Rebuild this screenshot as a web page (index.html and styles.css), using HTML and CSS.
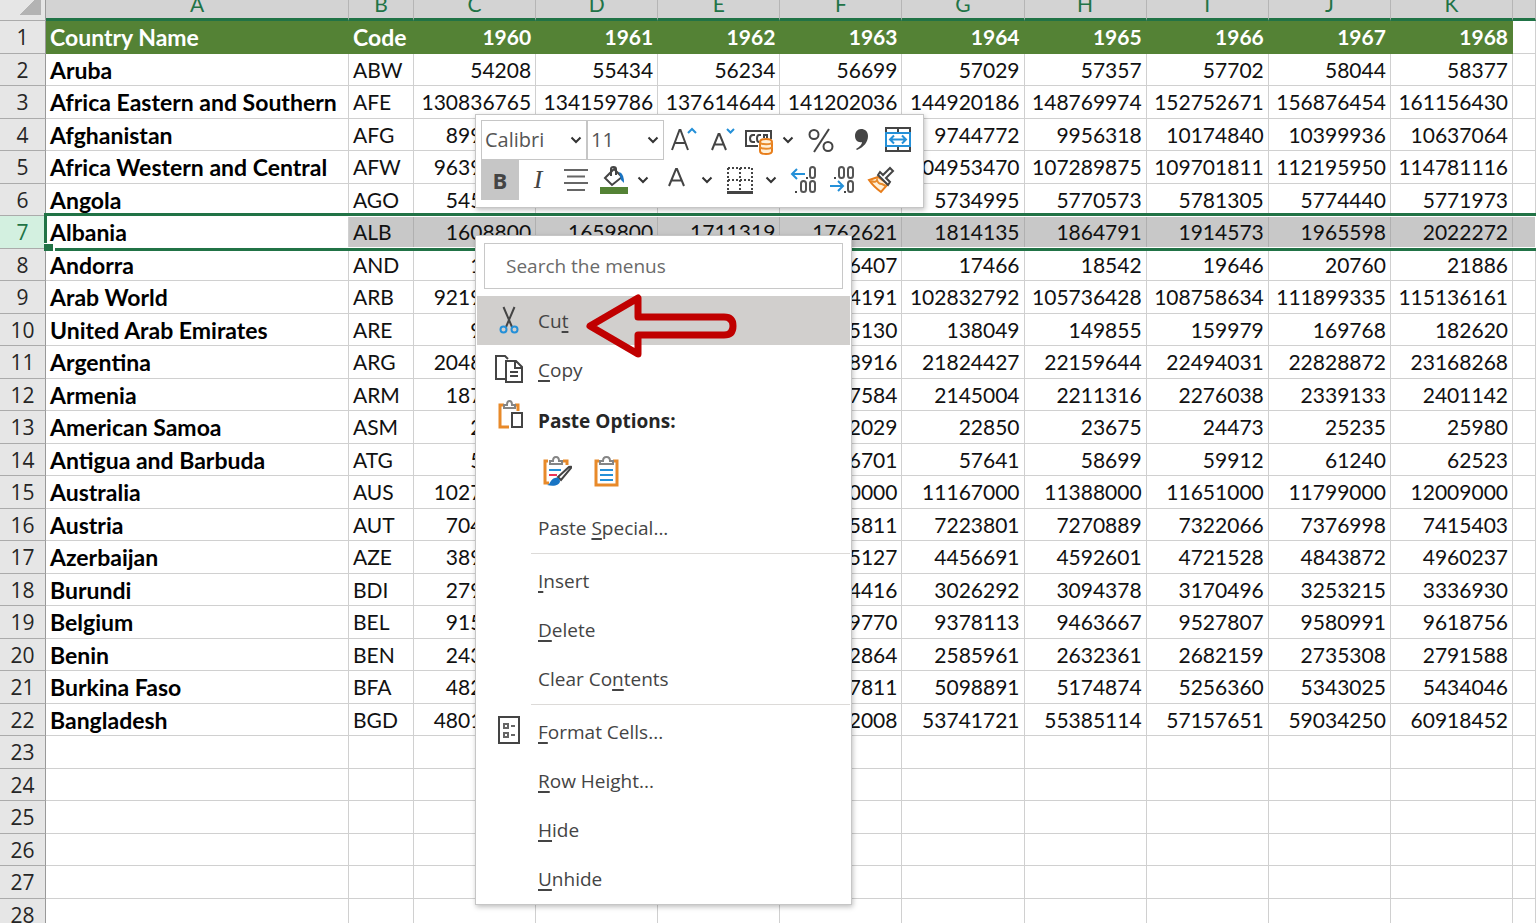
FILE: index.html
```html
<!DOCTYPE html>
<html lang="en">
<head>
<meta charset="utf-8">
<title>Population by country</title>
<link rel="stylesheet" href="styles.css">
</head>
<body>
<main class="workbook">
<table class="sheet">
<colgroup><col class="col-head"><col class="col-name"><col class="col-code"><col span="9"><col class="col-rest"></colgroup>
<thead>
<tr><th class="corner"></th><th>A</th><th>B</th><th>C</th><th>D</th><th>E</th><th>F</th><th>G</th><th>H</th><th>I</th><th>J</th><th>K</th><th></th></tr>
</thead>
<tbody>
<tr class="titles"><th>1</th><td>Country Name</td><td>Code</td><td>1960</td><td>1961</td><td>1962</td><td>1963</td><td>1964</td><td>1965</td><td>1966</td><td>1967</td><td>1968</td><td></td></tr>
<tr><th>2</th><td>Aruba</td><td>ABW</td><td>54208</td><td>55434</td><td>56234</td><td>56699</td><td>57029</td><td>57357</td><td>57702</td><td>58044</td><td>58377</td><td></td></tr>
<tr><th>3</th><td>Africa Eastern and Southern</td><td>AFE</td><td>130836765</td><td>134159786</td><td>137614644</td><td>141202036</td><td>144920186</td><td>148769974</td><td>152752671</td><td>156876454</td><td>161156430</td><td></td></tr>
<tr><th>4</th><td>Afghanistan</td><td>AFG</td><td>8996967</td><td></td><td></td><td></td><td>9744772</td><td>9956318</td><td>10174840</td><td>10399936</td><td>10637064</td><td></td></tr>
<tr><th>5</th><td>Africa Western and Central</td><td>AFW</td><td>96396419</td><td></td><td></td><td></td><td>104953470</td><td>107289875</td><td>109701811</td><td>112195950</td><td>114781116</td><td></td></tr>
<tr><th>6</th><td>Angola</td><td>AGO</td><td>5454938</td><td></td><td></td><td></td><td>5734995</td><td>5770573</td><td>5781305</td><td>5774440</td><td>5771973</td><td></td></tr>
<tr class="selected"><th>7</th><td>Albania</td><td>ALB</td><td>1608800</td><td>1659800</td><td>1711319</td><td>1762621</td><td>1814135</td><td>1864791</td><td>1914573</td><td>1965598</td><td>2022272</td><td></td></tr>
<tr><th>8</th><td>Andorra</td><td>AND</td><td>13410</td><td></td><td></td><td>16407</td><td>17466</td><td>18542</td><td>19646</td><td>20760</td><td>21886</td><td></td></tr>
<tr><th>9</th><td>Arab World</td><td>ARB</td><td>92197715</td><td></td><td></td><td>100034191</td><td>102832792</td><td>105736428</td><td>108758634</td><td>111899335</td><td>115136161</td><td></td></tr>
<tr><th>10</th><td>United Arab Emirates</td><td>ARE</td><td>92417</td><td></td><td></td><td>125130</td><td>138049</td><td>149855</td><td>159979</td><td>169768</td><td>182620</td><td></td></tr>
<tr><th>11</th><td>Argentina</td><td>ARG</td><td>20481781</td><td></td><td></td><td>21488916</td><td>21824427</td><td>22159644</td><td>22494031</td><td>22828872</td><td>23168268</td><td></td></tr>
<tr><th>12</th><td>Armenia</td><td>ARM</td><td>1874119</td><td></td><td></td><td>2077584</td><td>2145004</td><td>2211316</td><td>2276038</td><td>2339133</td><td>2401142</td><td></td></tr>
<tr><th>13</th><td>American Samoa</td><td>ASM</td><td>20127</td><td></td><td></td><td>22029</td><td>22850</td><td>23675</td><td>24473</td><td>25235</td><td>25980</td><td></td></tr>
<tr><th>14</th><td>Antigua and Barbuda</td><td>ATG</td><td>54132</td><td></td><td></td><td>56701</td><td>57641</td><td>58699</td><td>59912</td><td>61240</td><td>62523</td><td></td></tr>
<tr><th>15</th><td>Australia</td><td>AUS</td><td>10276477</td><td></td><td></td><td>10950000</td><td>11167000</td><td>11388000</td><td>11651000</td><td>11799000</td><td>12009000</td><td></td></tr>
<tr><th>16</th><td>Austria</td><td>AUT</td><td>7047539</td><td></td><td></td><td>7175811</td><td>7223801</td><td>7270889</td><td>7322066</td><td>7376998</td><td>7415403</td><td></td></tr>
<tr><th>17</th><td>Azerbaijan</td><td>AZE</td><td>3895398</td><td></td><td></td><td>4315127</td><td>4456691</td><td>4592601</td><td>4721528</td><td>4843872</td><td>4960237</td><td></td></tr>
<tr><th>18</th><td>Burundi</td><td>BDI</td><td>2797925</td><td></td><td></td><td>2964416</td><td>3026292</td><td>3094378</td><td>3170496</td><td>3253215</td><td>3336930</td><td></td></tr>
<tr><th>19</th><td>Belgium</td><td>BEL</td><td>9153489</td><td></td><td></td><td>9289770</td><td>9378113</td><td>9463667</td><td>9527807</td><td>9580991</td><td>9618756</td><td></td></tr>
<tr><th>20</th><td>Benin</td><td>BEN</td><td>2431617</td><td></td><td></td><td>2542864</td><td>2585961</td><td>2632361</td><td>2682159</td><td>2735308</td><td>2791588</td><td></td></tr>
<tr><th>21</th><td>Burkina Faso</td><td>BFA</td><td>4829289</td><td></td><td></td><td>5027811</td><td>5098891</td><td>5174874</td><td>5256360</td><td>5343025</td><td>5434046</td><td></td></tr>
<tr><th>22</th><td>Bangladesh</td><td>BGD</td><td>48013505</td><td></td><td></td><td>52202008</td><td>53741721</td><td>55385114</td><td>57157651</td><td>59034250</td><td>60918452</td><td></td></tr>
<tr><th>23</th><td></td><td></td><td></td><td></td><td></td><td></td><td></td><td></td><td></td><td></td><td></td><td></td></tr>
<tr><th>24</th><td></td><td></td><td></td><td></td><td></td><td></td><td></td><td></td><td></td><td></td><td></td><td></td></tr>
<tr><th>25</th><td></td><td></td><td></td><td></td><td></td><td></td><td></td><td></td><td></td><td></td><td></td><td></td></tr>
<tr><th>26</th><td></td><td></td><td></td><td></td><td></td><td></td><td></td><td></td><td></td><td></td><td></td><td></td></tr>
<tr><th>27</th><td></td><td></td><td></td><td></td><td></td><td></td><td></td><td></td><td></td><td></td><td></td><td></td></tr>
<tr><th>28</th><td></td><td></td><td></td><td></td><td></td><td></td><td></td><td></td><td></td><td></td><td></td><td></td></tr>
</tbody>
</table>

<div class="mini-toolbar" role="toolbar" aria-label="Formatting">
<div class="tool-row">
<span class="combo combo-font"><select aria-label="Font"><option>Calibri</option></select><svg class="chev" viewBox="0 0 12 8"><path d="M1.5 1.5 6 6l4.500-4.500"/></svg></span>
<span class="combo combo-size"><select aria-label="Font size"><option>11</option></select><svg class="chev" viewBox="0 0 12 8"><path d="M1.500 1.500 6 6l4.500-4.500"/></svg></span>
<button class="tool" aria-label="Increase font size"><svg width="30" height="30" viewBox="0 0 30 30"><path class="ink" d="M4 25 11.500 5h1L20 25M7 18h10"/><path class="blue" d="m20 8 4-4 4 4"/></svg></button>
<button class="tool" aria-label="Decrease font size"><svg width="30" height="30" viewBox="0 0 30 30"><path class="ink" d="M6 25 12.500 9h1L20 25M8.500 19.500h9"/><path class="blue" d="m21 4 3.500 3.500L28 4"/></svg></button>
<button class="tool" aria-label="Accounting number format"><svg width="30" height="30" viewBox="0 0 30 30"><path class="ink" d="M14 21H2V6h25v8"/><path class="ink" d="M11 10H9q-3 0-3 3.500T9 17h2M17 10h-2q-2 0-2 3.500t2 3.500M20 13v-3h3v3"/><path class="orange-fill" d="M16 17c0-4 12-4 12 0v9c0 4-12 4-12 0z"/><path class="orange" d="M16 17c0 3 12 3 12 0M16 21.500c0 3 12 3 12 0"/></svg></button>
<button class="tool drop" aria-label="Accounting options"><svg class="chev" viewBox="0 0 12 8"><path d="M1.500 1.500 6 6l4.500-4.500"/></svg></button>
<button class="tool wide" aria-label="Percent style"><svg width="30" height="30" viewBox="0 0 30 30"><circle class="ink" cx="9" cy="9.500" r="4.500"/><circle class="ink" cx="23" cy="21.500" r="4.500"/><path class="ink" d="M24 4 9 27"/></svg></button>
<button class="tool" aria-label="Comma style"><svg width="30" height="30" viewBox="0 0 30 30"><path class="solid" d="M15 4c4 0 7 2.500 7 7 0 6-4 11-11 14l-1-1c4-2 6-5 6-7-4 1-7-2-7-6 0-4 2.500-7 6-7z"/></svg></button>
<button class="tool" aria-label="Merge and center"><svg width="30" height="30" viewBox="0 0 30 30"><path class="ink" d="M2 3h24v23H2zM14 3v4M14 22v4"/><path class="blue" d="M2 8h24v13H2zM6 14.500h16M10 10.500l-4 4 4 4M18 10.500l4 4-4 4"/></svg></button>
</div>
<div class="tool-row">
<button class="tool letter on" aria-label="Bold"><b>B</b></button>
<button class="tool letter italic" aria-label="Italic"><i>I</i></button>
<button class="tool" aria-label="Center"><svg width="30" height="30" viewBox="0 0 30 30"><path class="ink thin-gray" d="M3 5h24M6 11.500h18M3 18h24M6 25h18"/></svg></button>
<button class="tool" aria-label="Fill color"><svg width="30" height="30" viewBox="0 0 30 30"><path class="ink" d="M6 13 15 4l8 8-10 8zM12 11V4q0-2 2.500-2T17 4v6"/><path class="deep" d="M20 7q5 1 5 11l-3-3-1-4z"/><path fill="#548235" d="M1 22h28v7H1z"/></svg></button>
<button class="tool drop" aria-label="Fill options"><svg class="chev" viewBox="0 0 12 8"><path d="M1.500 1.500 6 6l4.500-4.500"/></svg></button>
<button class="tool wide" aria-label="Font color"><svg width="30" height="30" viewBox="0 0 30 30"><path class="ink" d="m9 21 7-17h1l7 17M11.500 15.500h10"/></svg></button>
<button class="tool drop" aria-label="Font color options"><svg class="chev" viewBox="0 0 12 8"><path d="M1.500 1.500 6 6l4.500-4.500"/></svg></button>
<button class="tool wide" aria-label="Borders"><svg width="30" height="30" viewBox="0 0 30 30"><path class="dots" d="M4 3h24M4 15h24M4 3v22M16 3v22M28 3v22"/><path class="solid" d="M3 26h26v3H3z"/></svg></button>
<button class="tool drop" aria-label="Border options"><svg class="chev" viewBox="0 0 12 8"><path d="M1.500 1.500 6 6l4.500-4.500"/></svg></button>
<button class="tool wide" aria-label="Increase decimal"><svg width="30" height="30" viewBox="0 0 30 30"><path class="blue" d="M17 9H4M9 4 4 9l5 5"/><path class="solid" d="M18 12h2v2h-2zM7 26h2v2H7z"/><rect class="digit" x="22" y="2" width="5" height="11" rx="2.500"/><rect class="digit" x="13" y="16" width="5" height="11" rx="2.500"/><rect class="digit" x="22" y="16" width="5" height="11" rx="2.500"/></svg></button>
<button class="tool" aria-label="Decrease decimal"><svg width="30" height="30" viewBox="0 0 30 30"><path class="blue" d="M1 21h13M9 16l5 5-5 5"/><path class="solid" d="M5 12h2v2H5zM15 26h2v2h-2z"/><rect class="digit" x="10" y="2" width="5" height="11" rx="2.500"/><rect class="digit" x="19" y="2" width="5" height="11" rx="2.500"/><rect class="digit" x="19" y="16" width="5" height="11" rx="2.500"/></svg></button>
<button class="tool" aria-label="Format painter"><svg width="30" height="30" viewBox="0 0 30 30"><path class="orange-fill" d="m11 12-9 3q4 6 12 12l7-8z"/><path class="orange" fill="#fff" d="M4 16q5 2 6-1 1 4 5 4l4 2"/><path class="ink light" d="m11 10 10 10 2-3-4-4 7-7-3-3-7 7-3-3z"/></svg></button>
</div>
</div>

<div class="context-menu">
<div class="search"><input type="text" aria-label="Search the menus" placeholder="Search the menus"></div>
<button class="item active"><svg class="icon" viewBox="0 0 30 30"><path class="ink" d="M9.500 2 18 22M20.500 2 12 22"/><circle class="blue" cx="9.500" cy="24.500" r="3"/><circle class="blue" cx="20.500" cy="24.500" r="3"/></svg><span>Cu<u>t</u></span>
<svg class="pointer" viewBox="0 0 154 66"><path d="M54 5v19h86q9 0 9 9t-9 9H54v19L6 33z"/></svg></button>
<button class="item"><svg class="icon" viewBox="0 0 30 30"><path class="ink" d="M11 25H2V2h9l3 3M12 7h10l6 6v15H12zM21 7v7h7M16 18h8M16 22h8"/></svg><span><u>C</u>opy</span></button>
<div class="item heading"><svg class="icon" viewBox="0 0 30 30"><path class="orange wide-line" d="M10 5H6v22h9M21 5h3v6"/><path class="gray" d="M10 8V5h3q0-4 2.500-4T18 5h3v3z"/><path class="ink" fill="#fff" d="M18 13h10v14H18z"/></svg><span>Paste Options:</span></div>
<div class="paste-row">
<button class="paste" aria-label="Keep source formatting"><svg width="32" height="32" viewBox="0 0 32 32"><path class="orange wide-line" d="M8 5H5v22h4M23 5h4v4"/><path class="gray" d="M10 8V5h3q0-4 3-4t3 4h3v3z"/><path class="blue" d="M9 14h12"/><path stroke="#e35" stroke-width="2" d="M9 19h8"/><path class="ink light" d="M18 21 29 11q3-1 2 1L21 24z"/><path class="deep" d="M15 22q4-2 5 3c0 4-6 6-13 4 4-1 3-6 8-7z"/></svg></button>
<button class="paste" aria-label="Values"><svg width="32" height="32" viewBox="0 0 32 32"><path class="orange wide-line" d="M9 5H6v24h21V5h-4"/><path class="gray" d="M10 8V5h3q0-4 3.500-4T20 5h3v3z"/><path class="blue" d="M10 14h13M10 19h13M10 24h13"/></svg></button>
</div>
<button class="item"><span class="icon"></span><span>Paste <u>S</u>pecial...</span></button>
<hr>
<button class="item"><span class="icon"></span><span><u>I</u>nsert</span></button>
<button class="item"><span class="icon"></span><span><u>D</u>elete</span></button>
<button class="item"><span class="icon"></span><span>Clear Co<u>n</u>tents</span></button>
<hr>
<button class="item"><svg class="icon" viewBox="0 0 30 30"><path class="ink" d="M5 1h20v26H5z"/><path class="ink thin-gray" d="M10 8h4v4h-4zM10 17h4v4h-4zM17 10h4M17 19h4"/></svg><span><u>F</u>ormat Cells...</span></button>
<button class="item"><span class="icon"></span><span><u>R</u>ow Height...</span></button>
<button class="item"><span class="icon"></span><span><u>H</u>ide</span></button>
<button class="item"><span class="icon"></span><span><u>U</u>nhide</span></button>
</div>
</main>
</body>
</html>
```

FILE: styles.css
```css
* { box-sizing: border-box; }
body { margin: 0; overflow: hidden; background: #fff; }
.workbook { position: relative; height: 100vh; overflow: hidden; }

/* Spreadsheet, scrolled so that the column letters are partly cut */
.sheet { width: 100%; margin-top: -11px; table-layout: fixed; border-collapse: separate; border-spacing: 0; font: 21px/28px Lato, "Open Sans", sans-serif; color: #111; }
.col-head { width: 46px; }
.col-name { width: 303px; }
.col-code { width: 65px; }
.col-rest { width: 23px; }
.sheet tr { height: 32px; }
.sheet thead tr { height: 32px; }
.sheet tbody tr:nth-child(odd) { height: 33px; }
.sheet th, .sheet td { padding: 0 5px; border: 0 solid #d0d0d0; border-width: 0 1px 1px 0; white-space: nowrap; }
.sheet td { text-align: right; padding: 0 4px; }
.sheet td:nth-child(2), .sheet td:nth-child(3) { text-align: left; }
.sheet td:nth-child(2) { font-size: 23px; font-weight: 700; color: #000; }
.sheet .titles td:nth-child(3) { font-size: 23px; }
.sheet thead th { background: #d3d3d3; color: #217346; font-weight: 400; border-color: #b5b5b5; border-bottom: 3px solid #217346; }
.sheet thead .corner { background: linear-gradient(135deg, #e6e6e6 50%, #b3b3b3 50%) no-repeat 20px 5px / 21px 21px #e6e6e6; border-color: #9b9b9b; border-bottom: 1px solid #ababab; }
.sheet tbody th { padding: 0; background: #e6e6e6; color: #262626; font: 400 21px/28px "Open Sans", "Noto Sans", sans-serif; border-right-color: #999; border-bottom-color: #ababab; }
.sheet .titles td:not(:last-child) { background: #548235; border-color: #548235; color: #fff; font-weight: 700; }
.sheet .selected { position: relative; }
.sheet .selected th { background: #d3f0e0; color: #217346; }
.sheet .selected td:nth-child(n+3) { background: #c8c8c8; border-color: #b0b0b0; }
.selected th::after { content: ""; position: absolute; top: -3px; bottom: -2px; left: 44px; right: 0; border: 3px solid #217346; border-right: 0; box-shadow: inset 0 0 0 1px #fff; }
.selected th::before { content: ""; position: absolute; z-index: 1; bottom: -2px; left: 44px; width: 9px; height: 7px; background: #217346; border: solid #fff; border-width: 1px 2px 0 0; }

/* Shared icon strokes */
svg { display: block; flex: none; fill: none; }
.ink { stroke: #444; stroke-width: 2; }
.thin-gray { stroke: #666; }
.light { fill: #fff; }
.blue { stroke: #2490d8; stroke-width: 2; }
.orange { stroke: #e88a2a; stroke-width: 2; }
.orange-fill { stroke: #e87d1a; stroke-width: 2; fill: #fff0d8; }
.wide-line { stroke-width: 3; }
.gray { stroke: #858585; stroke-width: 2; fill: #fff; }
.deep { fill: #1874c4; }
.solid { fill: #444; }
.digit { stroke: #555; stroke-width: 2; }
.dots { stroke: #444; stroke-width: 2; stroke-dasharray: 2 2; }
.chev { width: 12px; height: 8px; stroke: #333; stroke-width: 2; }

button { margin: 0; padding: 0; border: 0; background: none; font: inherit; color: inherit; }
.mini-toolbar, .context-menu { position: absolute; left: 475px; background: #fff; border: 1px solid #c6c6c6; box-shadow: 1px 2px 5px rgba(0, 0, 0, .25); color: #444; font-family: "Open Sans", "Noto Sans", sans-serif; }

/* Floating format bar */
.mini-toolbar { top: 114px; width: 449px; padding: 5px 5px 7px; }
.tool-row { display: flex; height: 40px; align-items: center; }
.combo { display: flex; align-items: center; height: 40px; border: 1px solid #c6c6c6; padding-right: 4px; }
.combo-font { width: 106px; }
.combo-size { width: 77px; }
.combo select { flex: 1; min-width: 0; height: 36px; padding: 0 3px; border: 0; background: none; appearance: none; color: #555; font: 20px/28px "Open Sans", sans-serif; }
.tool { display: flex; align-items: center; justify-content: center; width: 38px; height: 40px; }
.drop { width: 20px; }
.wide { width: 44px; }
.letter { font-size: 22px; }
.italic { font-family: "Liberation Serif", serif; font-size: 26px; }
.on { background: #c6c6c6; }

/* Row context menu */
.context-menu { top: 235px; width: 377px; padding: 7px 1px 1px; font-size: 19px; line-height: 26px; }
.search { padding: 0 7px 7px; }
.search input { display: block; width: 100%; height: 46px; padding: 0 21px; border: 1px solid #c8c8c8; font: inherit; color: #444; }
.search input::placeholder { color: #6a6a6a; opacity: 1; }
.item { position: relative; display: flex; align-items: center; gap: 14px; width: 100%; height: 49px; padding-left: 17px; text-align: left; }
.icon { width: 30px; height: 30px; margin-bottom: 2px; }
.item u { text-decoration-thickness: 2px; text-underline-offset: 3px; }
.active { background: #d1cfcd; }
.heading { height: 54px; font-weight: 700; color: #262626; }
.heading .icon { margin-bottom: 12px; }
.paste-row { display: flex; gap: 18px; height: 55px; padding: 8px 0 0 63px; align-items: flex-start; }
.context-menu hr { margin: 1px 0 2px 54px; border: 0; border-top: 1px solid #dcdad8; }
.pointer { position: absolute; top: -3px; left: 107px; width: 154px; height: 66px; z-index: 1; stroke: #c00000; stroke-width: 7; stroke-linejoin: round; }
```
